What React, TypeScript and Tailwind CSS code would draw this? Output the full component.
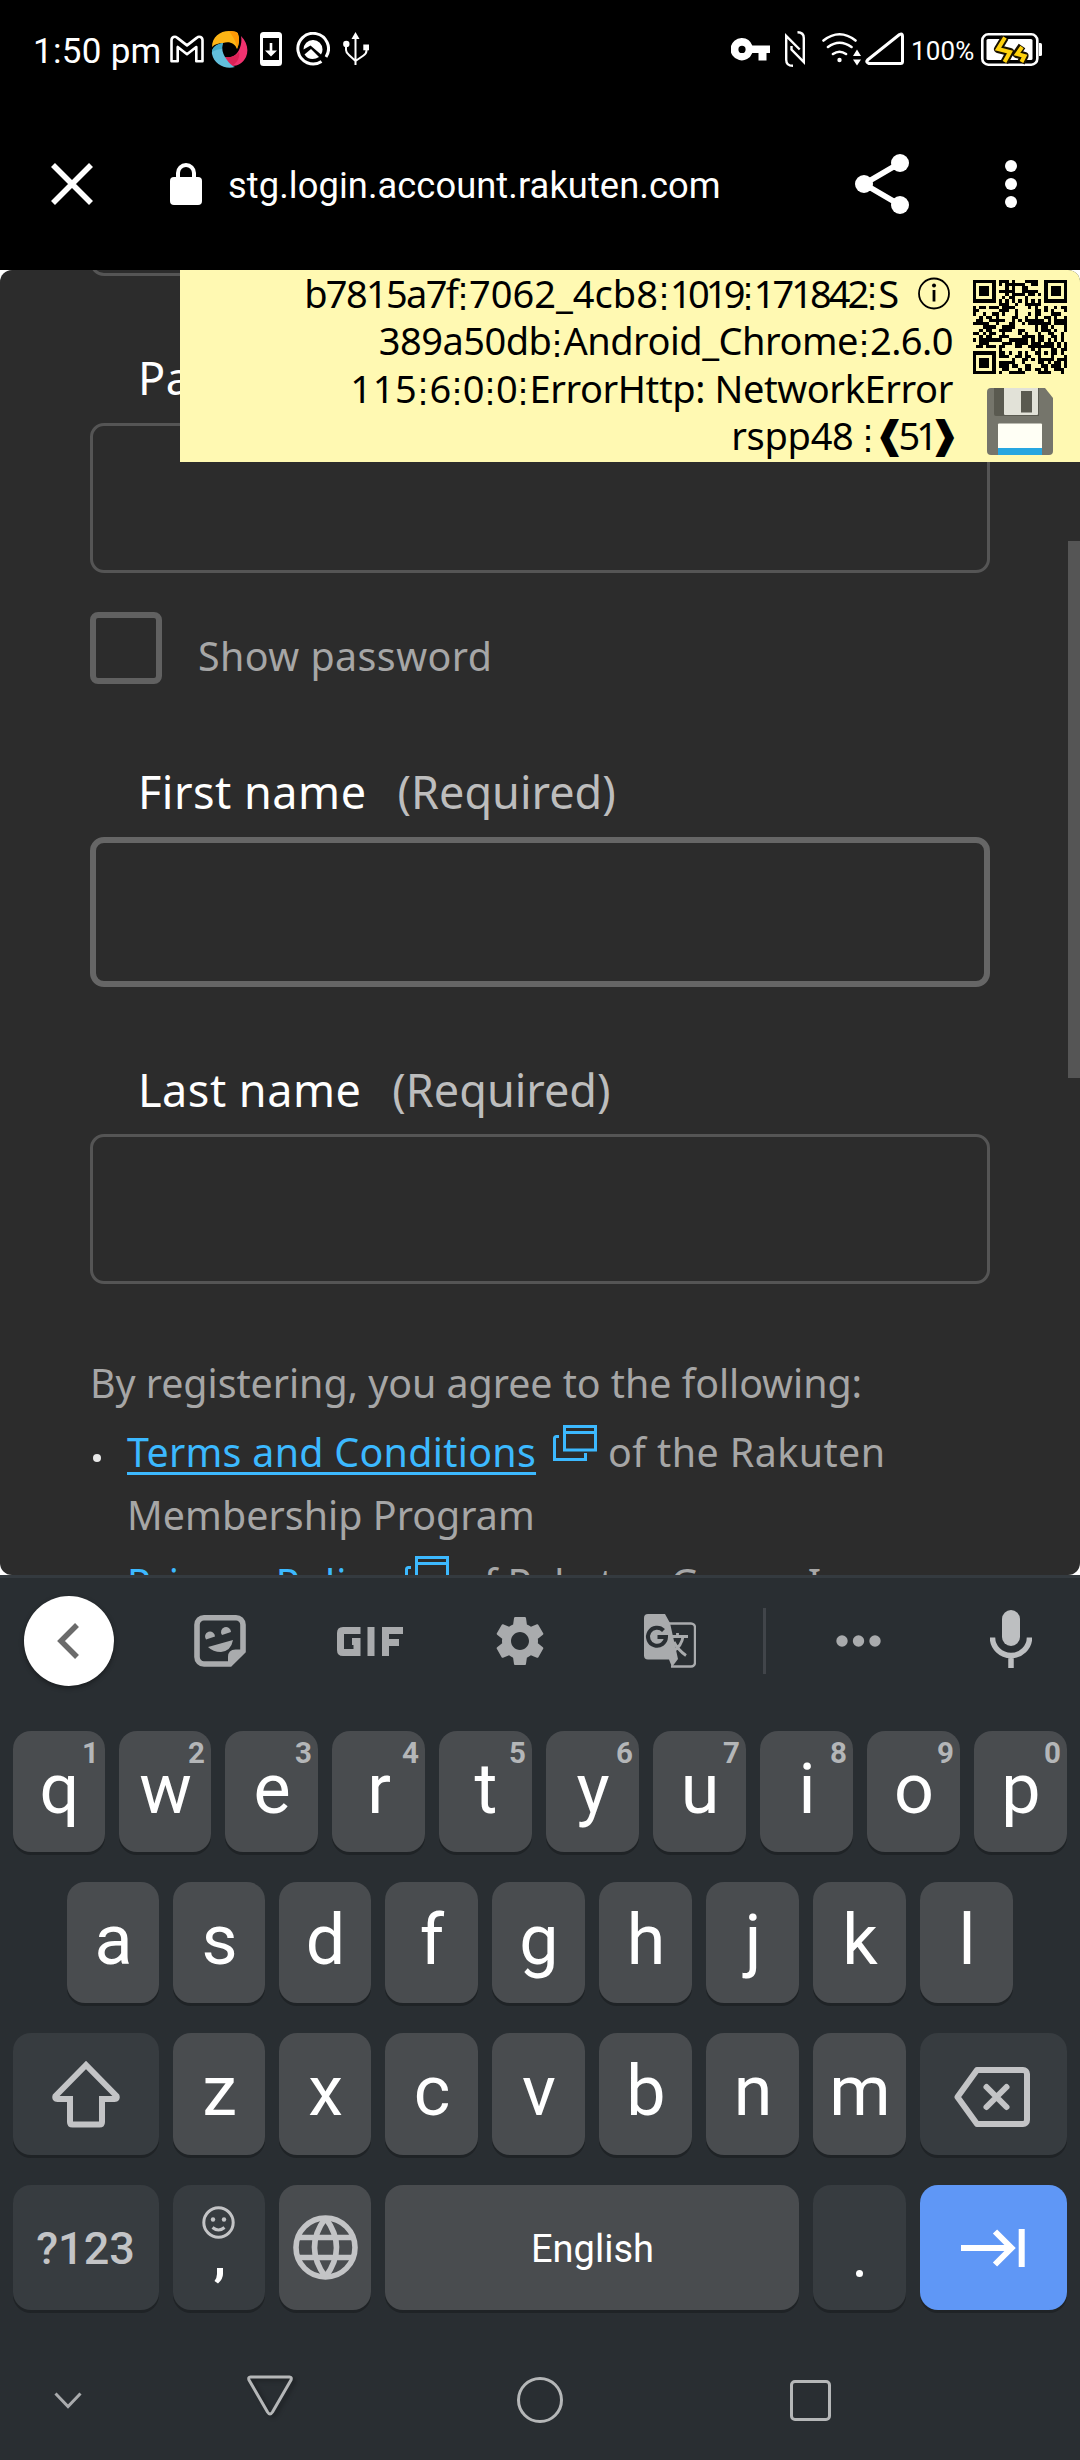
import React, { useMemo } from "react";
import type { ReactNode } from "react";

/* ---------- QR code (version 3, level M, mask 3) ---------- */

function encodeQr(text: string): number[][] {
  const n = 29;
  const dataLen = 44;
  const ecLen = 26;
  const bytes = Array.from(new TextEncoder().encode(text));
  const bits: number[] = [];
  const push = (v: number, l: number) => {
    for (let i = l - 1; i >= 0; i--) bits.push((v >>> i) & 1);
  };
  push(4, 4);
  push(bytes.length, 8);
  bytes.forEach((b) => push(b, 8));
  push(0, 4);
  while (bits.length % 8) bits.push(0);
  const data: number[] = [];
  for (let i = 0; i < bits.length; i += 8) data.push(parseInt(bits.slice(i, i + 8).join(""), 2));
  for (let p = 0xec; data.length < dataLen; p ^= 0xec ^ 0x11) data.push(p);

  const mul = (x: number, y: number) => {
    let z = 0;
    for (let i = 7; i >= 0; i--) {
      z = (z << 1) ^ ((z >>> 7) * 0x11d);
      z ^= ((y >>> i) & 1) * x;
    }
    return z;
  };
  const gen: number[] = new Array(ecLen).fill(0);
  gen[ecLen - 1] = 1;
  let root = 1;
  for (let i = 0; i < ecLen; i++) {
    for (let j = 0; j < ecLen; j++) {
      gen[j] = mul(gen[j], root);
      if (j + 1 < ecLen) gen[j] ^= gen[j + 1];
    }
    root = mul(root, 2);
  }
  const rem: number[] = new Array(ecLen).fill(0);
  for (const b of data) {
    const f = b ^ rem.shift()!;
    rem.push(0);
    gen.forEach((c, i) => (rem[i] ^= mul(c, f)));
  }
  const code = data.concat(rem);

  const m: number[][] = Array.from({ length: n }, () => new Array(n).fill(0));
  const fixed: boolean[][] = Array.from({ length: n }, () => new Array(n).fill(false));
  const set = (x: number, y: number, on: boolean) => {
    if (x < 0 || y < 0 || x >= n || y >= n) return;
    m[y][x] = on ? 1 : 0;
    fixed[y][x] = true;
  };
  for (let i = 0; i < n; i++) {
    set(6, i, i % 2 === 0);
    set(i, 6, i % 2 === 0);
  }
  for (const [cx, cy] of [[3, 3], [n - 4, 3], [3, n - 4]])
    for (let dy = -4; dy <= 4; dy++)
      for (let dx = -4; dx <= 4; dx++) {
        const d = Math.max(Math.abs(dx), Math.abs(dy));
        set(cx + dx, cy + dy, d !== 2 && d !== 4);
      }
  for (let dy = -2; dy <= 2; dy++)
    for (let dx = -2; dx <= 2; dx++) set(22 + dx, 22 + dy, Math.max(Math.abs(dx), Math.abs(dy)) !== 1);

  let r = 3;
  for (let i = 0; i < 10; i++) r = (r << 1) ^ ((r >>> 9) * 0x537);
  const format = ((3 << 10) | r) ^ 0x5412;
  const bit = (i: number) => ((format >>> i) & 1) === 1;
  for (let i = 0; i <= 5; i++) set(8, i, bit(i));
  set(8, 7, bit(6));
  set(8, 8, bit(7));
  set(7, 8, bit(8));
  for (let i = 9; i < 15; i++) set(14 - i, 8, bit(i));
  for (let i = 0; i < 8; i++) set(n - 1 - i, 8, bit(i));
  for (let i = 8; i < 15; i++) set(8, n - 15 + i, bit(i));
  set(8, n - 8, true);

  let k = 0;
  for (let right = n - 1; right >= 1; right -= 2) {
    if (right === 6) right = 5;
    for (let v = 0; v < n; v++)
      for (let j = 0; j < 2; j++) {
        const x = right - j;
        const y = ((right + 1) & 2) === 0 ? n - 1 - v : v;
        if (!fixed[y][x] && k < code.length * 8) {
          m[y][x] = (code[k >>> 3] >>> (7 - (k & 7))) & 1;
          k++;
        }
      }
  }
  for (let y = 0; y < n; y++) for (let x = 0; x < n; x++) if (!fixed[y][x] && (x + y) % 3 === 0) m[y][x] ^= 1;
  return m;
}

function QrCode({ text }: { text: string }) {
  const d = useMemo(
    () => encodeQr(text).map((row, y) => row.map((v, x) => (v ? `M${x} ${y}h1v1h-1z` : "")).join("")).join(""),
    [text],
  );
  return (
    <svg viewBox="0 0 29 29" className="block h-[94px] w-[94px]" shapeRendering="crispEdges">
      <path d={d} />
    </svg>
  );
}

/* ---------- Status bar and toolbar ---------- */

function StatusBar() {
  return (
    <div className="flex h-[98px] items-center pl-[33px] pr-[38px] text-white">
      <span className="w-[129px] whitespace-nowrap pt-[5px] text-[35px] leading-[41px] tracking-[0.3px]">1:50 pm</span>
      <svg className="ml-[8px] h-[28px] w-[34px]" viewBox="0 0 34 28" fill="none" stroke="#fff" strokeWidth="2.6" strokeLinejoin="round">
        <path d="M1.5 5.2C1.5 2 5 .8 7 2.6L17 10.4 27 2.6c2-1.8 5.5-.6 5.5 2.6v21h-6.2V12L17 19.2 7.700 12v14.200H1.500z" />
      </svg>
      <svg className="ml-[7px] h-[37px] w-[37px]" viewBox="0 0 37 37">
        <path d="M1 16C1 6 9 0 18 0c5 0 9 1 9 3 2 5 1 10-1 15-2-6-8-8-14-6-4 0-8 1-11 4z" fill="#fdb515" />
        <path d="M18 0c5 0 9 1 9 3 2 5 1 10-1 15 0-6-3-11-8-18z" fill="#fe9a06" />
        <path d="M30 5c6 6 8 14 5 21-3 6-8 9-14 9-4-1-6-5-7-9 6 1 11-1 14-7 2-4 3-9 2-14z" fill="#f0326f" />
        <path d="M14 26c6 1 11-1 14-5 1 5-1 10-7 14-4-1-6-5-7-9z" fill="#dc2256" />
        <path d="M12 12c-2 6 0 12 4 17 2 3 5 6 8 7-10 3-21-3-23-13-1-6 5-10 11-11z" fill="#62bfdc" />
        <path d="M12 12C6 13 1 16 1 21c3-2 7-3 10-3 0-2 0-4 1-6z" fill="#43aac8" />
      </svg>
      <svg className="ml-[12px] h-[34px] w-[22px]" viewBox="0 0 22 34" fill="#fff">
        <path fillRule="evenodd" d="M3.500 0h15A3.500 3.500 0 0 1 22 3.500v27a3.500 3.500 0 0 1-3.500 3.500h-15A3.500 3.500 0 0 1 0 30.500v-27A3.500 3.500 0 0 1 3.500 0zM3 6v22h16V6z" />
        <path d="M9.700 11h2.600v7.500H17l-6 6-6-6h4.700z" />
      </svg>
      <svg className="ml-[14px] h-[34px] w-[34px]" viewBox="0 0 34 34" fill="none" stroke="#fff" strokeWidth="3">
        <path d="M25.500 29.500A15.300 15.300 0 1 1 30 25" />
        <path d="M7.500 17.500A9.300 9.300 0 0 1 17 8a9.300 9.300 0 0 1 9.500 9.500q0 3-1.500 5L14.500 13.500z" fill="#fff" stroke="none" />
        <path d="M8.500 22.500l6.500-5.500 8 8q-3 2-6.500 2-5 0-8-4.500z" fill="#fff" stroke="none" />
      </svg>
      <svg className="ml-[13px] h-[34px] w-[26px]" viewBox="0 0 26 34" fill="none" stroke="#fff" strokeWidth="2">
        <path d="M12.500 5v28M12.500 29l8-5.500q3-2 3-5V16M12.500 29l-6.500-6q-3-2.500-3-5v-5" />
        <path d="M12.500 0l4 7h-8z" fill="#fff" stroke="none" />
        <circle cx="3.300" cy="12" r="3.200" fill="#fff" stroke="none" />
        <path d="M20.300 12.500H26v5.800h-5.700z" fill="#fff" stroke="none" />
      </svg>

      <div className="grow" />

      <svg className="h-[23px] w-[39px]" viewBox="0 0 39 23" fill="#fff">
        <path fillRule="evenodd" d="M11 0a11.500 11.500 0 0 1 10.300 7.500H39v7.500h-3.500v7.500H27.500V15h-6.200A11.200 11.200 0 1 1 11 0zM11 7.800a3.600 3.600 0 1 0 0 7.200 3.600 3.600 0 0 0 0-7.200z" />
      </svg>
      <svg className="ml-[15px] h-[36px] w-[20px]" viewBox="0 0 20 36" fill="none" stroke="#fff" strokeWidth="2.400">
        <path d="M8 34.800q-6.800 0-6.800-6V5l13.500 13.500M12.500 1.200Q18.800 1.200 18.800 7v24L6.500 18.500V15" />
      </svg>
      <svg className="ml-[17px] h-[34px] w-[40px]" viewBox="0 0 40 34" fill="none" stroke="#fff" strokeWidth="2.600" strokeLinecap="round">
        <path d="M1.500 8.500q16-12.500 32 0M6 15q11.500-8.500 23.500 0M11 22q6.500-4.500 13 0" />
        <circle cx="17.500" cy="28" r="2.200" fill="#fff" stroke="none" />
        <path d="M35 17.500l4 6.500h-8zM35 33.500l4-6h-8z" fill="#fff" stroke="none" />
      </svg>
      <svg className="ml-[3px] h-[34px] w-[40px]" viewBox="0 0 40 34" fill="none" stroke="#fff" strokeWidth="3" strokeLinejoin="round">
        <path d="M4 31.500h31.500q2 0 2-2V4q0-3-3-1.500L2.500 28q-2 2 1.500 3.500z" />
      </svg>
      <span className="ml-[6px] w-[63px] whitespace-nowrap pt-[4px] text-[26px] leading-[30px] tracking-[0.1px]">100%</span>
      <svg className="ml-[7px] h-[33px] w-[61px]" viewBox="0 0 61 33">
        <rect x="1.300" y="1.300" width="55" height="30.400" rx="6" fill="none" stroke="#fff" strokeWidth="2.600" />
        <path d="M58 10h1.500q1.500 0 1.500 1.500v10q0 1.500-1.500 1.500H58z" fill="#fff" />
        <rect x="5.500" y="6" width="46" height="21" rx="1.500" fill="#fff" />
        <path d="M24 4.500l-7 11.500 12 3-5.500 10M41 13l-5.500 8 8 2-3.500 6.500" fill="none" stroke="#1a1200" strokeWidth="8" strokeLinejoin="round" />
        <path d="M24 4.500l-7 11.500 12 3-5.500 10M41 14l-5 7 7.500 2-3 6" fill="none" stroke="#ffd20d" strokeWidth="4" />
      </svg>
    </div>
  );
}

function Toolbar() {
  return (
    <div className="flex h-[172px] items-center pl-[51px] pr-[63px] text-white">
      <svg className="h-[42px] w-[42px]" viewBox="0 0 42 42" stroke="#fff" strokeWidth="5.600">
        <path d="M2 2l38 38M40 2L2 40" />
      </svg>
      <svg className="ml-[77px] h-[42px] w-[32px]" viewBox="0 0 32 42">
        <path d="M8 16V10a8 8 0 0 1 16 0v6" fill="none" stroke="#fff" strokeWidth="4" />
        <rect y="14" width="32" height="28" rx="4" fill="#fff" />
      </svg>
      <span className="ml-[26px] whitespace-nowrap pt-[4px] text-[36.300px] leading-[42px] tracking-[0.06px]">stg.login.account.rakuten.com</span>
      <div className="grow" />
      <svg className="h-[60px] w-[54px]" viewBox="0 0 54 60" fill="#fff">
        <path d="M45 9L9 30l36 21" fill="none" stroke="#fff" strokeWidth="5.500" />
        <circle cx="45" cy="9" r="9" />
        <circle cx="9" cy="30" r="9" />
        <circle cx="45" cy="51" r="9" />
      </svg>
      <svg className="ml-[96px] h-[48px] w-[12px]" viewBox="0 0 12 48" fill="#fff">
        <circle cx="6" cy="6" r="6" />
        <circle cx="6" cy="24" r="6" />
        <circle cx="6" cy="42" r="6" />
      </svg>
    </div>
  );
}

/* ---------- Debug overlay ---------- */

function Dots() {
  return (
    <span className="inline-flex h-[30px] w-[12px] items-center justify-center align-[1px] text-[34px] leading-[30px] tracking-normal">⋮</span>
  );
}

function DebugOverlay() {
  return (
    <div className="absolute right-0 top-0 flex h-[192px] w-[900px] justify-end bg-[#fff9b2] text-black">
      <div className="flex flex-col items-end whitespace-nowrap text-[38px] leading-[47.300px]">
        <div className="flex h-[47.300px] items-center">
          <span>
            <span className="tracking-[-1.700px]">b7815a7f</span>
            <Dots />
            7062_4cb8
            <Dots />
            <span className="tracking-[-3.800px]">1019</span>
            <Dots />
            <span className="tracking-[-3px]">171842</span>
            <Dots />S
          </span>
          <svg className="ml-[19px] mr-[3px] h-[33px] w-[32px]" viewBox="0 0 32 33" fill="none" stroke="#000" strokeWidth="1.800">
            <circle cx="16" cy="16.500" r="15" />
            <path d="M16 13v11.500" strokeWidth="2.800" />
            <circle cx="16" cy="8.500" r="2" fill="#000" stroke="none" />
          </svg>
        </div>
        <div className="h-[47.300px] tracking-[-0.500px]">389a50db<Dots />Android_Chrome<Dots />2.6.0</div>
        <div className="h-[47.300px] tracking-[-0.400px]"><span className="tracking-[0.600px]">115</span><Dots />6<Dots />0<Dots />0<Dots />ErrorHttp: NetworkError</div>
        <div className="flex h-[47.300px]">
          <span className="tracking-[-0.300px]">rspp48</span>
          <span className="ml-[8px] mr-[7px]"><Dots /></span>
          <span className="inline-flex w-[19px] justify-center font-['DejaVu_Sans']">❰</span>
          <span className="-ml-[1px] tracking-[-4px]">51</span>
          <span className="ml-[2px] inline-flex w-[17px] justify-center font-['DejaVu_Sans']">❱</span>
        </div>
      </div>
      <div className="ml-[20px] mr-[13px] flex flex-col items-center pt-[10px]">
        <QrCode text="b7815a7f⋮7062_4cb8⋮1019⋮171842⋮S" />
        <svg className="mt-[14px] h-[67px] w-[66px]" viewBox="0 0 66 67">
          <path d="M4 0h54l8 10v53q0 4-4 4H4q-4 0-4-4V4q0-4 4-4z" fill="#75756b" />
          <path d="M7 0h45v28H9q-2 0-2-2z" fill="#5a5a50" />
          <path d="M17 0h34v26q0 1-1 1H18q-1 0-1-1z" fill="#e2e2d8" />
          <path d="M34 3h11v21.500H34z" fill="#5a5a50" />
          <path d="M11 60V36.500q0-1 1-1h42q1 0 1 1V60z" fill="#fffff5" />
          <path d="M11 60h44v7H11z" fill="#26a6e0" />
        </svg>
      </div>
    </div>
  );
}

/* ---------- Registration form ---------- */

function Label({ text, required }: { text: string; required?: boolean }) {
  return (
    <div className="flex h-[60px] gap-[31px] whitespace-nowrap pl-[48px] text-[45px] leading-[62px] text-white">
      <span className="tracking-[0.500px]">{text}</span>
      {required && <span className="text-[#bdbdbd]">(Required)</span>}
    </div>
  );
}

function NewWindowIcon() {
  return (
    <svg className="h-[36px] w-[44px]" viewBox="0 0 44 36" fill="none" stroke="#3cb9ff" strokeWidth="3">
      <path d="M11.500 1.500h31v23.500h-31zM11.500 7.500h31" />
      <path d="M6 11.500H3.500q-2 0-2 2V34.500H32.500V28" />
    </svg>
  );
}

function RegistrationForm() {
  return (
    <div className="relative h-[1305px] overflow-hidden rounded-[12px] bg-[#2c2c2c] font-['Noto_Sans',sans-serif]">
      <div className="px-[90px]">
        <div className="-mt-[144px] h-[150px] rounded-[14px] border-[3px] border-[#555]" />
        <div className="mt-[71px]"><Label text="Password" /></div>
        <div className="mt-[16px] h-[150px] rounded-[14px] border-[3px] border-[#555]" />
        <div className="mt-[39px] flex h-[72px]">
          <div className="w-[72px] rounded-[8px] border-[6px] border-[#616161]" />
          <span className="pl-[36px] pt-[8px] text-[39.375px] leading-[72px] tracking-[0.450px] text-[#a6a6a6]">Show password</span>
        </div>
        <div className="mt-[77px]"><Label text="First name" required /></div>
        <div className="mt-[16px] h-[150px] rounded-[14px] border-[6px] border-[#666]" />
        <div className="mt-[72px]"><Label text="Last name" required /></div>
        <div className="mt-[15px] h-[150px] rounded-[14px] border-[3px] border-[#555]" />
        <div className="mt-[68px] whitespace-nowrap text-[39.375px] leading-[63px] text-[#a6a6a6]">
          <p className="tracking-[-0.040px]">By registering, you agree to the following:</p>
          <ul className="mt-[6px]">
            <li className="flex">
              <span className="mt-[33px] ml-[3px] mr-[26px] h-[8px] w-[8px] rounded-full bg-[#e8e8e8]" />
              <div>
                <div className="flex">
                  <span className="tracking-[0.300px] text-[#3cb9ff] underline decoration-[3px] underline-offset-[5px]">Terms and Conditions</span>
                  <span className="ml-[17px] mr-[11px] mt-[4px]"><NewWindowIcon /></span>
                  <span className="tracking-[0.450px]">of the Rakuten</span>
                </div>
                <div className="tracking-[0.060px]">Membership Program</div>
              </div>
            </li>
            <li className="mt-[5px] flex">
              <span className="mt-[33px] ml-[3px] mr-[26px] h-[8px] w-[8px] rounded-full bg-[#e8e8e8]" />
              <span className="tracking-[0.900px] text-[#3cb9ff] underline decoration-[3px] underline-offset-[5px]">Privacy Policy</span>
              <span className="ml-[17px] mr-[17px] mt-[4px]"><NewWindowIcon /></span>
              <span className="-ml-[6px]">of Rakuten Group, Inc.</span>
            </li>
          </ul>
        </div>
      </div>
      <DebugOverlay />
      <div className="absolute right-0 top-[271px] h-[537px] w-[12px] bg-[#555]" />
    </div>
  );
}

/* ---------- Keyboard ---------- */

const keyShape = "relative flex h-full rounded-[18px] shadow-[0_3px_0_#1f2326] text-white";

function LetterKey({ letter, hint, narrow }: { letter: string; hint?: string; narrow?: boolean }) {
  return (
    <div className={`${keyShape} ${narrow ? "w-[92px]" : "w-[93px]"} justify-center bg-[#494c4f]`}>
      <span className="pl-[1px] pt-[17px] text-[70px] leading-[82px]">{letter}</span>
      {hint && (
        <span className="absolute right-[6px] top-[5px] text-[29.500px] font-bold leading-[35px] text-[#b4b6b8]">{hint}</span>
      )}
    </div>
  );
}

function WideKey({ children, className = "" }: { children: ReactNode; className?: string }) {
  return <div className={`${keyShape} items-center justify-center ${className}`}>{children}</div>;
}

function SuggestionStrip() {
  return (
    <div className="flex h-[90px] items-center pl-[24px] pr-[48px]">
      <div className="flex h-[90px] w-[90px] items-center justify-center rounded-full bg-white shadow-[0_2px_5px_rgba(0,0,0,0.4)]">
        <svg className="mr-[2px] h-[36px] w-[23px]" viewBox="0 0 23 36" fill="none" stroke="#6b6b6b" strokeWidth="5.500">
          <path d="M20 2L4 18l16 16" />
        </svg>
      </div>
      <svg className="ml-[80px] h-[52px] w-[52px]" viewBox="0 0 52 52" fill="#a9abad">
        <path d="M10 2.800h32a7 7 0 0 1 7 7V36L36 49H10a7 7 0 0 1-7-7V9.800a7 7 0 0 1 7-7z" fill="none" stroke="#a9abad" strokeWidth="5.600" />
        <path d="M34 51V42q0-7.500 7.500-7.500H51z" />
        <path d="M12 24.500a5 5 0 1 1 9-3zM28 20a5 5 0 1 1 9-3zM14 32l25-7q-2 11-12 12-8 0-13-5z" />
      </svg>
      <svg className="ml-[91px] h-[29px] w-[66px]" viewBox="0 0 66 29" fill="none" stroke="#a9abad" strokeWidth="7">
        <path d="M23.500 3.500H6q-2.500 0-2.500 2.500v17q0 2.500 2.500 2.500h14V14.500H15M34 0v29M48.500 29V3.500H66M48 15.500h14" />
      </svg>
      <svg className="ml-[87px] h-[60px] w-[60px]" viewBox="0 0 24 24" fill="#a9abad">
        <path d="M19.140 12.940c.040-.300.060-.610.060-.940 0-.320-.020-.640-.070-.940l2.030-1.580a.490.490 0 0 0 .120-.610l-1.920-3.320a.488.488 0 0 0-.590-.220l-2.390.960c-.500-.380-1.030-.700-1.620-.940l-.360-2.540a.484.484 0 0 0-.480-.410h-3.840c-.240 0-.430.170-.470.410l-.360 2.540c-.590.240-1.130.570-1.620.940l-2.390-.960c-.220-.080-.470 0-.590.220L2.740 8.870c-.120.210-.080.470.120.610l2.030 1.580c-.050.300-.090.630-.090.940s.020.640.070.940l-2.030 1.580a.490.490 0 0 0-.120.610l1.920 3.320c.120.220.370.290.590.220l2.390-.960c.500.380 1.030.700 1.620.940l.360 2.540c.050.240.240.410.480.410h3.840c.240 0 .440-.170.470-.410l.360-2.540c.590-.240 1.130-.560 1.620-.940l2.390.960c.220.080.470 0 .590-.220l1.920-3.320c.120-.220.070-.470-.120-.610l-2.010-1.580zM12 15.600c-1.980 0-3.600-1.620-3.600-3.600s1.620-3.600 3.600-3.600 3.600 1.620 3.600 3.600-1.620 3.600-3.600 3.600z" />
      </svg>
      <svg className="ml-[94px] h-[54px] w-[52px]" viewBox="0 0 52 54">
        <path d="M4 0h17l5 9 8 36 -6 8-3-7.500H4a4 4 0 0 1-4-4V4a4 4 0 0 1 4-4z" fill="#a9abad" />
        <path d="M25 9.500h22a4 4 0 0 1 4 4v35a4 4 0 0 1-4 4H27" fill="none" stroke="#a9abad" strokeWidth="2.400" />
        <path d="M27 22.500h17M33.500 19v3.500M39 22.500q-1 9-10 15M30 28q4 8 12 13.500" fill="none" stroke="#a9abad" strokeWidth="2.800" />
        <path d="M19.500 16.500a9 9 0 1 0 2.500 6.500h-8.500" fill="none" stroke="#292e32" strokeWidth="4" />
      </svg>
      <div className="ml-[67px] h-[66px] w-[3px] bg-[#41454a]" />
      <svg className="ml-[70px] h-[12px] w-[45px]" viewBox="0 0 45 12" fill="#a9abad">
        <circle cx="6" cy="6" r="5.700" />
        <circle cx="22.500" cy="6" r="5.700" />
        <circle cx="39" cy="6" r="5.700" />
      </svg>
      <div className="grow" />
      <svg className="mb-[4px] h-[58px] w-[42px]" viewBox="0 0 42 58">
        <rect x="12" width="18" height="36" rx="9" fill="#bdbfc1" />
        <path d="M2.500 27.500a18.500 18 0 0 0 37 0M21 46v12" fill="none" stroke="#bdbfc1" strokeWidth="5.500" />
      </svg>
    </div>
  );
}

function Keyboard() {
  return (
    <div className="h-[885px] border-t-[3px] border-[#343a3f] bg-[#292e32]">
      <div className="pt-[18px]"><SuggestionStrip /></div>
      <div className="mt-[45px] flex flex-col gap-[30px] pl-[13px]">
        <div className="flex h-[121px] gap-[14px]">
          {"qwertyuiop".split("").map((c, i) => (
            <LetterKey key={c} letter={c} hint={String((i + 1) % 10)} narrow={i < 2} />
          ))}
        </div>
        <div className="flex h-[121px] gap-[14px] pl-[54px]">
          {"asdfghjkl".split("").map((c, i) => (
            <LetterKey key={c} letter={c} narrow={i < 3} />
          ))}
        </div>
        <div className="flex h-[122px] gap-[14px]">
          <WideKey className="w-[146px] bg-[#373c40]">
            <svg className="h-[68px] w-[68px]" viewBox="0 0 68 68" fill="none" stroke="#c3c4c6" strokeWidth="6" strokeLinejoin="round">
              <path d="M34 5L3.500 36q-1 3 2 3H18v23q0 2.500 2.500 2.500h27q2.500 0 2.500-2.500V39h12.500q3 0 2-3z" strokeLinejoin="miter" />
            </svg>
          </WideKey>
          {"zxcvbnm".split("").map((c, i) => (
            <LetterKey key={c} letter={c} narrow={i < 2} />
          ))}
          <WideKey className="w-[147px] bg-[#373c40]">
            <svg className="mr-[3px] mt-[6px] h-[60px] w-[76px]" viewBox="0 0 76 60" fill="none" stroke="#c3c4c6" strokeWidth="6">
              <path d="M23 3h46a4 4 0 0 1 4 4v46a4 4 0 0 1-4 4H23L3.500 30z" strokeLinejoin="round" />
              <path d="M32.500 20l20 20M52.500 20l-20 20" strokeLinecap="round" />
            </svg>
          </WideKey>
        </div>
        <div className="flex h-[125px] gap-[14px]">
          <WideKey className="w-[146px] bg-[#373c40]">
            <span className="pr-[1px] pt-[2px] text-[45px] font-medium leading-[53px] text-[#c3c4c6]">?123</span>
          </WideKey>
          <div className={`${keyShape} w-[92px] flex-col items-center bg-[#373c40]`}>
            <svg className="mr-[1px] mt-[21px] h-[33px] w-[33px]" viewBox="0 0 33 33" fill="none" stroke="#c3c4c6" strokeWidth="3">
              <circle cx="16.500" cy="16.500" r="14.700" />
              <path d="M10.500 21.500q6 5 12 0" />
              <circle cx="11" cy="13.500" r="2.200" fill="#c3c4c6" stroke="none" />
              <circle cx="22" cy="13.500" r="2.200" fill="#c3c4c6" stroke="none" />
            </svg>
            <svg className="mt-[29px] h-[16px] w-[10px]" viewBox="0 0 10 16">
              <path d="M3 0h6v6q0 5-5 9.500L.500 13Q3 9.500 3 6z" fill="#fff" />
            </svg>
          </div>
          <div className={`${keyShape} w-[92px] items-center justify-center bg-[#494c4f]`}>
            <svg className="h-[65px] w-[65px]" viewBox="0 0 65 65" fill="none" stroke="#c3c4c6" strokeWidth="5.600">
              <circle cx="32.500" cy="32.500" r="29.500" />
              <path d="M5 22.500h55M5 42.500h55M32.500 3q-22 29.500 0 59M32.500 3q22 29.500 0 59" />
            </svg>
          </div>
          <div className={`${keyShape} w-[414px] items-center justify-center bg-[#494c4f]`}>
            <span className="pl-[1px] pt-[3px] text-[38px] leading-[44px]">English</span>
          </div>
          <div className={`${keyShape} w-[93px] justify-center bg-[#373c40]`}>
            <span className="mt-[85px] h-[7px] w-[7px] rounded-full bg-white" />
          </div>
          <WideKey className="w-[147px] bg-[#5f97f6]">
            <svg className="mr-[2px] h-[38px] w-[64px]" viewBox="0 0 64 38" fill="none" stroke="#fff" strokeWidth="6">
              <path d="M0 19h50M34 2.500L50.500 19 34 35.500M60.700 0v38" />
            </svg>
          </WideKey>
        </div>
      </div>
      <NavigationBar />
    </div>
  );
}

function NavigationBar() {
  return (
    <div className="mt-[65px] flex h-[50px] items-center pl-[54px]">
      <svg className="h-[17px] w-[28px]" viewBox="0 0 28 17" fill="none" stroke="#a9abad" strokeWidth="3">
        <path d="M1.500 1.500L14 14.500l12.500-13" />
      </svg>
      <svg className="mb-[9px] ml-[164px] h-[41px] w-[48px] drop-shadow-[3px_2px_2px_rgba(0,0,0,0.3)]" viewBox="0 0 48 41" fill="none" stroke="#b5b7b8" strokeWidth="3" strokeLinejoin="round">
        <path d="M4.500 2h39q2.500 0 1.500 3L26.500 37q-2.500 4-5 0L3 5Q2 2 4.500 2z" />
      </svg>
      <div className="ml-[223px] h-[46px] w-[46px] rounded-full border-[3px] border-[#b5b7b8]" />
      <div className="ml-[227px] h-[41px] w-[41px] rounded-[5px] border-[3px] border-[#b5b7b8]" />
    </div>
  );
}

export default function App() {
  return (
    <div className="h-[2460px] w-[1080px] overflow-hidden bg-black font-['Roboto',sans-serif]">
      <StatusBar />
      <Toolbar />
      <div className="bg-white">
        <RegistrationForm />
      </div>
      <Keyboard />
    </div>
  );
}
